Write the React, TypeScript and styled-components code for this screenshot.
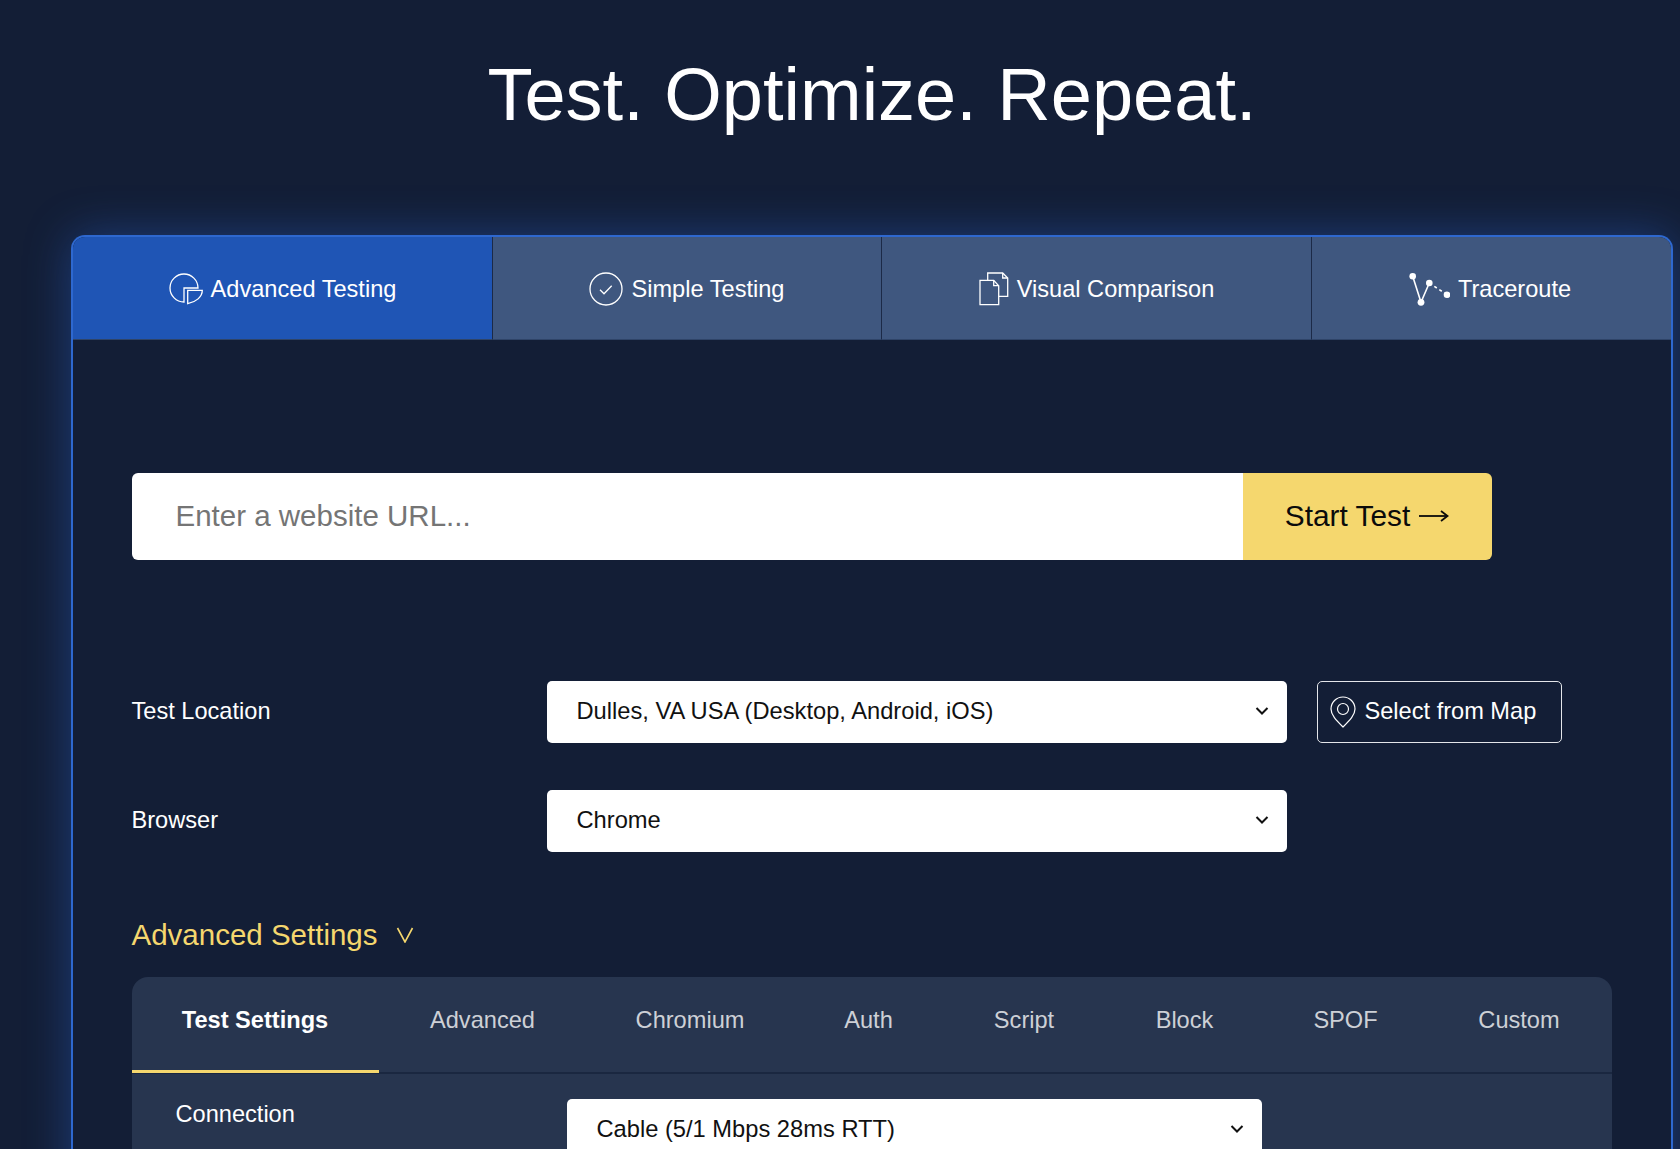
import React from "react";
import styled, { createGlobalStyle } from "styled-components";

const Global = createGlobalStyle`
  html, body { margin: 0; padding: 0; height: 1149px; overflow: hidden; background: #131e36; }
  body { font-family: "Liberation Sans", Arial, sans-serif; color: #fff; }
  * { box-sizing: border-box; }
`;

const Page = styled.div`
  height: 1149px;
  overflow: hidden;
  padding: 0 7px 0 71px;
  background: #131e36;
`;
const Heading = styled.h1`
  margin: 0;
  height: 235px;
  padding-top: 51px;
  text-align: center;
  font-size: 74px;
  line-height: 88px;
  font-weight: 400;
`;
const Card = styled.div`
  width: 1602px;
  min-height: 1000px;
  border: 2px solid #2e68cf;
  border-bottom: 0;
  border-radius: 14px 14px 0 0;
  box-shadow: 0 0 46px rgba(42, 102, 215, 0.42);
  background: #131e36;
`;
const TabBar = styled.div`
  display: grid;
  grid-template-columns: 420px 389px 430px 1fr;
  height: 103px;
  border-radius: 12px 12px 0 0;
  overflow: hidden;
`;
const MainTab = styled.div<{ $active?: boolean }>`
  display: flex;
  align-items: center;
  justify-content: center;
  gap: 8px;
  font-size: 23.6px;
  padding-top: 3px;
  background: ${(p) => (p.$active ? "#1f55b5" : "#3f577f")};
  border-right: 1.5px solid #1c2a47;
  border-bottom: 1px solid #2f4468;
  &:last-child { border-right: 0; padding-right: 4px; }
  svg { margin-top: -2px; }
`;
const Body = styled.div`
  padding: 133px 58px 0 58.5px;
`;
const UrlRow = styled.div`
  display: flex;
  width: 1360px;
  height: 87px;
  border-radius: 6px;
  overflow: hidden;
  margin-bottom: 121px;
`;
const UrlInput = styled.div`
  flex: 1;
  background: #fff;
  color: #757575;
  font-size: 29.5px;
  display: flex;
  align-items: center;
  padding: 0 0 2px 44px;
`;
const StartButton = styled.div`
  width: 249px;
  background: #f5d76e;
  color: #0b0b0b;
  font-size: 29.8px;
  display: flex;
  align-items: center;
  justify-content: center;
  gap: 9px;
  padding-bottom: 2px;
`;
const FieldRow = styled.div`
  display: flex;
  align-items: center;
  height: 62px;
  margin-bottom: 47px;
  font-size: 23.6px;
`;
const FieldLabel = styled.div`
  width: 415px;
  padding-bottom: 2px;
`;
const Select = styled.div<{ $w: number }>`
  width: ${(p) => p.$w}px;
  height: 62px;
  flex: none;
  background: #fff;
  border-radius: 5px;
  color: #111;
  font-size: 23.7px;
  display: flex;
  align-items: center;
  justify-content: space-between;
  padding: 0 18px 2px 30px;
`;
const MapButton = styled.div`
  margin-left: 30px;
  width: 245px;
  height: 62px;
  border: 1.5px solid #e4e6ea;
  border-radius: 5px;
  display: flex;
  align-items: center;
  padding: 0 0 1px 12px;
  gap: 9px;
  font-size: 23.6px;
`;
const SettingsTitle = styled.div`
  display: flex;
  align-items: center;
  gap: 18px;
  height: 36px;
  margin-top: 65px;
  margin-bottom: 24px;
  color: #f5d76e;
  font-size: 29.5px;
`;
const Panel = styled.div`
  width: 1480px;
  height: 300px;
  background: #27354f;
  border-radius: 16px 16px 0 0;
`;
const SubTabs = styled.div`
  display: flex;
  height: 97px;
  border-bottom: 2px solid #1a2740;
`;
const SubTab = styled.div<{ $active?: boolean; $w: number }>`
  width: ${(p) => p.$w}px;
  height: 96px;
  padding-top: 27px;
  text-align: center;
  font-size: 23.6px;
  line-height: 32px;
  font-weight: ${(p) => (p.$active ? 700 : 400)};
  color: ${(p) => (p.$active ? "#fff" : "#cdd0d6")};
  border-bottom: ${(p) => (p.$active ? "3px solid #f5d76e" : "0")};
`;
const PanelRow = styled.div`
  display: flex;
  padding: 25px 0 0 44px;
  font-size: 23.6px;
`;
const PanelLabel = styled.div`
  width: 391px;
  line-height: 32px;
  margin-top: -1px;
`;

const Chevron = () => (
  <svg width="14" height="10" viewBox="0 0 14 10" fill="none" stroke="#111" strokeWidth="2">
    <path d="M1.5 2 L7 7.5 L12.5 2" />
  </svg>
);
const ThinV = () => (
  <svg width="18" height="16" viewBox="0 0 18 16" fill="none" stroke="#f5d76e" strokeWidth="1.6">
    <path d="M1.5 1 L9 15 L16.5 1" />
  </svg>
);
const Arrow = () => (
  <svg width="30" height="16" viewBox="0 0 30 16" fill="none" stroke="#0b0b0b" strokeWidth="1.8">
    <path d="M0 8H28" />
    <path d="M22 3 L28.5 8 L22 13" />
  </svg>
);

const PieIcon = () => (
  <svg width="34" height="34" viewBox="0 0 34 34" fill="none" stroke="#fff" strokeWidth="1.3">
    <path d="M15 30A14 14 0 1 1 29 16H15V30Z" />
    <path d="M18.7 18.3H33.3C33.3 25 27 30 18.7 31.7Z" />
  </svg>
);
const CheckIcon = () => (
  <svg width="34" height="34" viewBox="0 0 34 34" fill="none" stroke="#fff" strokeWidth="1.3">
    <circle cx="17" cy="17" r="16" />
    <path d="M11 17.7L15 21.7L22.7 13.7" />
  </svg>
);
const FilesIcon = () => (
  <svg width="30" height="34" viewBox="0 0 30 34" fill="none" stroke="#fff" strokeWidth="1.3">
    <path d="M1 8.3H14.7L19.7 13.7V32.7H1Z" />
    <path d="M14.7 8.3V13.7H19.7" />
    <path d="M8.7 8.3V1H23.7L28.7 6V24.3H19.7" />
    <path d="M23.7 1V6H28.7" />
  </svg>
);
const RouteIcon = () => (
  <svg width="42" height="34" viewBox="0 0 42 34" fill="none" stroke="#fff" strokeWidth="1.6">
    <path d="M4.7 4.3L13 30.3L21.3 11" />
    <path d="M21.3 11L39 22.7" strokeDasharray="3 3" />
    <g fill="#fff" stroke="none">
      <circle cx="4.7" cy="4.3" r="3.3" />
      <circle cx="13" cy="30.3" r="3.4" />
      <circle cx="21.3" cy="11" r="3.3" />
      <circle cx="39" cy="22.7" r="3.3" />
    </g>
  </svg>
);
const PinIcon = () => (
  <svg width="26" height="32" viewBox="0 0 26 32" fill="none" stroke="#fff" strokeWidth="1.2">
    <path d="M13 31C6 24 1 19 1 13A12 12 0 0 1 25 13C25 19 20 24 13 31Z" />
    <circle cx="13" cy="13" r="5.5" />
  </svg>
);

const subTabs: [string, number][] = [
  ["Test Settings", 247],
  ["Advanced", 208],
  ["Chromium", 207],
  ["Auth", 150],
  ["Script", 161],
  ["Block", 160],
  ["SPOF", 162],
  ["Custom", 185],
];

export default function App() {
  return (
    <Page>
      <Global />
      <Heading>Test. Optimize. Repeat.</Heading>
      <Card>
        <TabBar>
          <MainTab $active><PieIcon />Advanced Testing</MainTab>
          <MainTab><CheckIcon />Simple Testing</MainTab>
          <MainTab><FilesIcon />Visual Comparison</MainTab>
          <MainTab><RouteIcon />Traceroute</MainTab>
        </TabBar>
        <Body>
          <UrlRow>
            <UrlInput>Enter a website URL...</UrlInput>
            <StartButton>Start Test <Arrow /></StartButton>
          </UrlRow>
          <FieldRow>
            <FieldLabel>Test Location</FieldLabel>
            <Select $w={740}>Dulles, VA USA (Desktop, Android, iOS)<Chevron /></Select>
            <MapButton><PinIcon />Select from Map</MapButton>
          </FieldRow>
          <FieldRow>
            <FieldLabel>Browser</FieldLabel>
            <Select $w={740}>Chrome<Chevron /></Select>
          </FieldRow>
          <SettingsTitle>Advanced Settings <ThinV /></SettingsTitle>
          <Panel>
            <SubTabs>
              {subTabs.map(([t, w], i) => (
                <SubTab key={t} $w={w} $active={i === 0}>{t}</SubTab>
              ))}
            </SubTabs>
            <PanelRow>
              <PanelLabel>Connection</PanelLabel>
              <Select $w={695}>Cable (5/1 Mbps 28ms RTT)<Chevron /></Select>
            </PanelRow>
          </Panel>
        </Body>
      </Card>
    </Page>
  );
}
